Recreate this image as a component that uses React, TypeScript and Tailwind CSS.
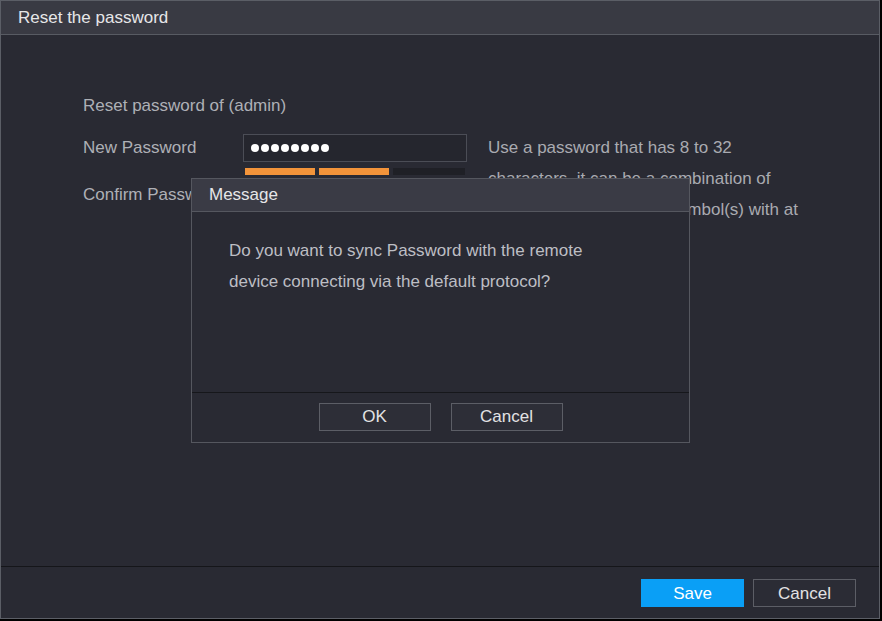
import React from "react";

export default function App() {
  const font = { fontFamily: '"Liberation Sans", Arial, sans-serif' };
  return (
    <div className="w-[882px] h-[621px] bg-black relative" style={font}>
      <div className="w-[880px] h-[619px] border border-[#5b5e66] bg-[#292a33] flex flex-col">
        {/* header */}
        <div className="h-[34px] bg-[#393a43] border-b border-[#585b63] flex items-center pl-[17px] text-[17px] text-[#e6e6e8]">
          Reset the password
        </div>
        {/* body */}
        <div className="flex-1 pl-[82px] pt-[55px] text-[17px] text-[#aeb0b6]">
          <div className="h-[31px] leading-[31px]">Reset password of (admin)</div>
          <div className="flex items-start mt-[11px]">
            <div className="flex flex-col">
              <div className="flex h-[47px]">
                <div className="w-[160px] leading-[31px]">New Password</div>
                <div className="flex flex-col">
                  <div className="mt-[2px] w-[224px] h-[28px] border border-[#4b4d56] bg-[#25262e] flex items-center pl-[7px] gap-[2px]">
                    {Array.from({ length: 8 }).map((_, i) => (
                      <div key={i} className="w-[8px] h-[8px] rounded-full bg-white" />
                    ))}
                  </div>
                  <div className="flex gap-[4px] mt-[6px] pl-[2px]">
                    <div className="w-[70px] h-[7px] bg-[#f3943a]" />
                    <div className="w-[70px] h-[7px] bg-[#f3943a]" />
                    <div className="w-[72px] h-[7px] bg-[#1f2026]" />
                  </div>
                </div>
              </div>
              <div className="flex h-[31px]">
                <div className="w-[160px] leading-[31px] whitespace-nowrap overflow-hidden">Confirm Password</div>
                <div className="mt-[2px] w-[224px] h-[28px] border border-[#4b4d56] bg-[#25262e]" />
              </div>
            </div>
            <div className="ml-[21px] leading-[31px] text-[#a9abb1]">
              <div>Use a password that has 8 to 32</div>
              <div>characters, it can be a combination of</div>
              <div>letter(s), number(s) and symbol(s) with at</div>
            </div>
          </div>
        </div>
        {/* footer */}
        <div className="h-[52px] border-t border-[#15161a] flex items-center justify-end pr-[23px] gap-[9px] pt-[1px]">
          <button className="w-[103px] h-[28px] bg-[#0a9ff6] text-white text-[17px] leading-none">Save</button>
          <button className="w-[103px] h-[28px] border border-[#5c5e66] bg-[#2b2c35] text-[#e2e2e4] text-[17px] leading-none">
            Cancel
          </button>
        </div>
      </div>

      {/* dialog overlay */}
      <div className="absolute left-[191px] top-[178px] w-[499px] h-[265px] border border-[#55575f] bg-[#292a33] flex flex-col">
        <div className="h-[33px] bg-[#3a3b45] border-b border-[#55575f] flex items-center pl-[17px] text-[17px] text-[#e6e6e8]">
          Message
        </div>
        <div className="flex-1 pl-[37px] pt-[23px] text-[17px] leading-[31px] text-[#bdbec4]">
          <div>Do you want to sync Password with the remote</div>
          <div>device connecting via the default protocol?</div>
        </div>
        <div className="h-[50px] border-t border-[#16171b] flex items-center justify-center gap-[20px] pb-[2px]">
          <button className="w-[112px] h-[28px] border border-[#5c5e66] bg-[#2d2e37] text-[#e2e2e4] text-[17px] leading-none">OK</button>
          <button className="w-[112px] h-[28px] border border-[#5c5e66] bg-[#2d2e37] text-[#e2e2e4] text-[17px] leading-none">Cancel</button>
        </div>
      </div>
    </div>
  );
}
